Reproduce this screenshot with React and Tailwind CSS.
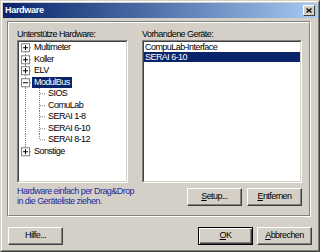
import React from 'react';

const FONT = { fontFamily: '"Liberation Sans", Arial, sans-serif' };

// Tahoma-ish narrow look: small size with tight tracking
const txt = 'text-[9px] tracking-[-0.55px]';

const btn =
  `flex items-center justify-center h-[18px] w-[55px] bg-[#d4d0c8] text-black ${txt} border border-t-white border-l-white border-r-[#404040] border-b-[#404040] shadow-[inset_-1px_-1px_0_#808080]`;

const tree = [
  { label: 'Multimeter', kind: 'plus' },
  { label: 'Koller', kind: 'plus' },
  { label: 'ELV', kind: 'plus' },
  { label: 'ModulBus', kind: 'minus', selected: true },
  { label: 'SIOS', child: true },
  { label: 'ComuLab', child: true },
  { label: 'SERAI 1-8', child: true },
  { label: 'SERAI 6-10', child: true },
  { label: 'SERAI 8-12', child: true, lastChild: true },
  { label: 'Sonstige', kind: 'plus', last: true },
];

function Connector({ item, first }) {
  const h = 11.5;
  const c = 5.75;
  const dot = { stroke: '#808080', strokeWidth: 1, strokeDasharray: '1 1' };
  if (item.child) {
    return (
      <svg width="27" height={h} viewBox={`0 0 27 ${h}`} className="shrink-0">
        <line x1="6.5" y1="0" x2="6.5" y2={h} {...dot} />
        <line x1="20.5" y1="0" x2="20.5" y2={item.lastChild ? c : h} {...dot} />
        <line x1="21" y1={c} x2="27" y2={c} {...dot} />
      </svg>
    );
  }
  return (
    <svg width="13" height={h} viewBox={`0 0 13 ${h}`} className="shrink-0">
      <line x1="6.5" y1={first ? c : 0} x2="6.5" y2={item.last ? c : h} {...dot} />
      <line x1="11" y1={c} x2="13" y2={c} {...dot} />
      <rect x="2.5" y="1.75" width="8" height="8" fill="white" stroke="#808080" strokeWidth="1" />
      <line x1="4" y1={c} x2="9" y2={c} stroke="black" strokeWidth="1" />
      {item.kind === 'plus' && <line x1="6.5" y1="3.25" x2="6.5" y2="8.25" stroke="black" strokeWidth="1" />}
    </svg>
  );
}

function Sunken({ className, children }) {
  return (
    <div className={`border border-t-[#808080] border-l-[#808080] border-r-white border-b-white ${className}`}>
      <div className="h-full bg-white border border-t-[#404040] border-l-[#404040] border-r-[#d4d0c8] border-b-[#d4d0c8] overflow-hidden">
        {children}
      </div>
    </div>
  );
}

export default function App() {
  return (
    <div style={FONT} className="w-[320px] h-[252px] bg-[#d4d0c8] border border-t-[#d4d0c8] border-l-[#d4d0c8] border-r-[#404040] border-b-[#404040] text-black">
      <div className="h-full flex flex-col p-[1px] border border-t-white border-l-white border-r-[#808080] border-b-[#808080]">
        {/* Title bar */}
        <div className="h-[15px] flex items-center justify-between pl-[2px] pr-[2px] bg-linear-to-r from-[#0a246a] to-[#a6caf0]">
          <span className="text-white font-bold text-[9px] tracking-[-0.3px] leading-none">Hardware</span>
          <div className="w-[12px] h-[11px] flex items-center justify-center bg-[#d4d0c8] border border-t-white border-l-white border-r-[#404040] border-b-[#404040]">
            <svg width="6" height="5" viewBox="0 0 6 5">
              <path d="M0.5 0.5 L5.5 4.5 M5.5 0.5 L0.5 4.5" stroke="black" strokeWidth="1.3" />
            </svg>
          </div>
        </div>

        {/* Group box */}
        <div className="mt-[3px] ml-[4px] w-[304px] h-[196px] border border-t-[#808080] border-l-[#808080] border-r-white border-b-white">
          <div className="h-full border border-t-white border-l-white border-r-[#808080] border-b-[#808080] pt-[6px] pl-[8px] flex gap-[14px]">
            {/* Left column */}
            <div className="w-[111px] flex flex-col">
              <div className={`h-[11px] leading-[11px] ${txt}`}>Unterstütze Hardware:</div>
              <Sunken className="h-[143px]">
                <div className="flex flex-col">
                  {tree.map((item, i) => (
                    <div key={item.label} className={`flex items-center h-[11.5px] ${txt}`}>
                      <Connector item={item} first={i === 0} />
                      <span
                        className={`px-[2px] leading-[11.5px] whitespace-nowrap ${item.selected ? 'bg-[#0a246a] text-white' : ''}`}
                      >
                        {item.label}
                      </span>
                    </div>
                  ))}
                </div>
              </Sunken>
              <div className={`mt-[3px] leading-[10px] text-[#1c2a9c] whitespace-nowrap ${txt}`}>
                Hardware einfach per Drag&amp;Drop
                <br />
                in die Geräteliste ziehen.
              </div>
            </div>

            {/* Right column */}
            <div className="w-[160px] flex flex-col">
              <div className={`h-[11px] leading-[11px] ${txt}`}>Vorhandene Geräte:</div>
              <Sunken className="h-[143px]">
                <div className={`flex flex-col ${txt}`}>
                  <div className="h-[10px] leading-[10px] pl-[1px]">CompuLab-Interface</div>
                  <div className="h-[10px] leading-[10px] pl-[1px] bg-[#0a246a] text-white">SERAI 6-10</div>
                </div>
              </Sunken>
              <div className="mt-[5px] flex justify-end gap-[5px]">
                <button className={btn}>
                  <span><u>S</u>etup...</span>
                </button>
                <button className={btn}>
                  <span><u>E</u>ntfernen</span>
                </button>
              </div>
            </div>
          </div>
        </div>

        {/* Bottom buttons */}
        <div className="mt-[10px] flex items-center pl-[5px] pr-[5px]">
          <button className={btn}>Hilfe...</button>
          <div className="flex-1" />
          <div className="flex gap-[4px]">
            <button className={`flex items-center justify-center h-[18px] w-[55px] bg-[#d4d0c8] ${txt} border border-black shadow-[inset_1px_1px_0_white,inset_-1px_-1px_0_#404040,inset_-2px_-2px_0_#808080]`}>
              <span><u>O</u>K</span>
            </button>
            <button className={btn}>
              <span><u>A</u>bbrechen</span>
            </button>
          </div>
        </div>
      </div>
    </div>
  );
}
